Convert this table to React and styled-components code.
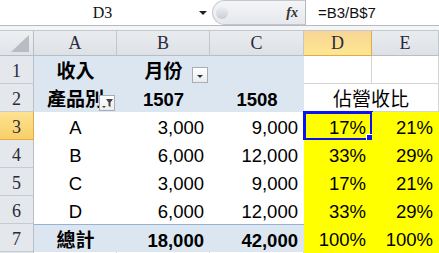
import React from "react";
import styled, { createGlobalStyle } from "styled-components";

const GlobalStyle = createGlobalStyle`
  html, body {
    margin: 0;
    padding: 0;
    background: #ffffff;
    overflow: hidden;
  }
`;

const CELL_FONT = `"Liberation Sans", "Noto Sans CJK TC", Arial, sans-serif`;
const HEAD_FONT = `"Liberation Serif", "Times New Roman", serif`;

const Window = styled.div`
  width: 439px;
  height: 253px;
  overflow: hidden;
  background: #f3f4f6;
`;

const FormulaBar = styled.div`
  display: flex;
  height: 25px;
  background: #ffffff;
  border-bottom: 1px solid #b4bac2;
`;

const NameBox = styled.div`
  width: 212px;
  display: flex;
  align-items: center;
  padding-right: 5px;
  box-sizing: border-box;
`;

const NameText = styled.div`
  flex: 1;
  text-align: center;
  font-family: ${HEAD_FONT};
  font-size: 16px;
  color: #111;
  padding-left: 6px;
`;

const DropArrow = styled.div`
  width: 0;
  height: 0;
  border-left: 4px solid transparent;
  border-right: 4px solid transparent;
  border-top: 4px solid #222;
`;

const ToolPanel = styled.div`
  width: 93px;
  display: flex;
  align-items: center;
  justify-content: space-between;
  padding: 0 7px 0 3px;
  box-sizing: border-box;
  background: linear-gradient(#f4f5f7, #e6e8ec);
  border: 1px solid #c3c7cd;
  border-right: none;
  border-radius: 13px 0 0 13px;
`;

const Knob = styled.div`
  width: 12px;
  height: 12px;
  border-radius: 50%;
  background: linear-gradient(#eceef1, #c9cdd3);
`;

const Fx = styled.span`
  font-family: ${HEAD_FONT};
  font-style: italic;
  font-weight: bold;
  font-size: 14px;
  color: #333;
`;

const FormulaInput = styled.div`
  flex: 1;
  display: flex;
  align-items: center;
  padding-left: 12px;
  border-left: 1px solid #b4bac2;
  font-family: ${CELL_FONT};
  font-size: 15px;
  color: #111;
`;

const Gap = styled.div`
  height: 4px;
  background: #f4f5f7;
  border-bottom: 1px solid #c3c8ce;
`;

const Sheet = styled.div`
  display: grid;
  grid-template-columns: 34px 83px 93px 94px 68px 67px;
  grid-template-rows: 25px repeat(8, 28px);
  background: #ffffff;
`;

const Corner = styled.div`
  display: flex;
  align-items: flex-end;
  justify-content: flex-end;
  padding: 0 4px 3px 0;
  box-sizing: border-box;
  background: linear-gradient(#eef0f3, #dfe3e8);
  border-right: 1px solid #b8bec6;
  border-bottom: 1px solid #b8bec6;
`;

const ColHead = styled.div`
  display: flex;
  align-items: center;
  justify-content: center;
  box-sizing: border-box;
  font-family: ${HEAD_FONT};
  font-size: 18px;
  color: #2a2a3a;
  background: ${(p) =>
    p.$active
      ? "linear-gradient(#f8d596, #fde78f)"
      : "linear-gradient(#e9ecef, #dde1e6)"};
  border-right: 1px solid ${(p) => (p.$active ? "#e2aa4b" : "#c2c7ce")};
  border-bottom: 1px solid ${(p) => (p.$active ? "#e2aa4b" : "#b8bec6")};
`;

const RowHead = styled.div`
  display: flex;
  align-items: center;
  justify-content: center;
  box-sizing: border-box;
  padding-top: 3px;
  font-family: ${HEAD_FONT};
  font-size: 18px;
  color: #2a2a3a;
  background: ${(p) =>
    p.$active ? "linear-gradient(#fde291, #f9cf68)" : "#e4e7eb"};
  border-right: 1px solid ${(p) => (p.$active ? "#e2aa4b" : "#b8bec6")};
  border-bottom: 1px solid ${(p) => (p.$active ? "#e2aa4b" : "#c6cbd1")};
`;

const fills = {
  pivot: "#dce6f1",
  yellow: "#ffff00",
  white: "#ffffff",
};

const Cell = styled.div`
  position: relative;
  box-sizing: border-box;
  padding: 3px 6px 0 6px;
  line-height: 25px;
  white-space: nowrap;
  font-family: ${CELL_FONT};
  font-size: ${(p) => (p.$cjk ? "19px" : "18.5px")};
  font-weight: ${(p) => (p.$bold ? 700 : 400)};
  color: #000;
  text-align: ${(p) => p.$align || "left"};
  background: ${(p) => fills[p.$fill || "white"]};
  grid-column: ${(p) => (p.$span ? `span ${p.$span}` : "auto")};
  border-top: ${(p) => (p.$topLine ? "1px solid #95b3d7" : "none")};
  border-right: ${(p) => (p.$grid ? "1px solid #d4d4d4" : "none")};
  border-bottom: ${(p) => (p.$grid ? "1px solid #d4d4d4" : "none")};
`;

const ListButton = styled.div`
  position: absolute;
  right: 2px;
  bottom: 1px;
  width: 16px;
  height: 16px;
  box-sizing: border-box;
  display: flex;
  align-items: center;
  justify-content: center;
  background: linear-gradient(#ffffff, #e9ecef);
  border: 1px solid #a7adb5;
`;

const SmallArrow = styled.div`
  width: 0;
  height: 0;
  margin-top: 3px;
  border-left: 3px solid transparent;
  border-right: 3px solid transparent;
  border-top: 3px solid #333;
`;

const Selection = styled.div`
  position: absolute;
  left: -1px;
  top: -1px;
  right: -1px;
  bottom: -1px;
  border: 3px solid #0a14f0;
  pointer-events: none;
`;

const Handle = styled.div`
  position: absolute;
  right: -3px;
  bottom: -3px;
  width: 5px;
  height: 5px;
  background: #0a14f0;
  border: 1px solid #ffffff;
`;

const FilterIcon = () => (
  <svg width="12" height="10" viewBox="0 0 12 10">
    <path d="M1 8 L5 8 L3 10 Z" fill="#444" />
    <path d="M5 1 L12 1 L9.5 4.5 L9.5 9 L7.5 8 L7.5 4.5 Z" fill="#444" />
  </svg>
);

const CornerMark = () => (
  <svg width="18" height="17" viewBox="0 0 18 17">
    <path d="M18 0 L18 17 L0 17 Z" fill="#b9bdc3" />
  </svg>
);

const dataRows = [
  { id: 3, item: "A", b: "3,000", c: "9,000", d: "17%", e: "21%" },
  { id: 4, item: "B", b: "6,000", c: "12,000", d: "33%", e: "29%" },
  { id: 5, item: "C", b: "3,000", c: "9,000", d: "17%", e: "21%" },
  { id: 6, item: "D", b: "6,000", c: "12,000", d: "33%", e: "29%" },
];

export default function App() {
  return (
    <>
      <GlobalStyle />
      <Window>
        <FormulaBar>
          <NameBox>
            <NameText>D3</NameText>
            <DropArrow />
          </NameBox>
          <ToolPanel>
            <Knob />
            <Fx>fx</Fx>
          </ToolPanel>
          <FormulaInput>=B3/B$7</FormulaInput>
        </FormulaBar>
        <Gap />
        <Sheet>
          <Corner>
            <CornerMark />
          </Corner>
          {["A", "B", "C", "D", "E"].map((c) => (
            <ColHead key={c} $active={c === "D"}>
              {c}
            </ColHead>
          ))}

          <RowHead>1</RowHead>
          <Cell $fill="pivot" $bold $cjk $align="center">收入</Cell>
          <Cell $fill="pivot" $bold $cjk $align="center">
            月份
            <ListButton>
              <SmallArrow />
            </ListButton>
          </Cell>
          <Cell $fill="pivot" />
          <Cell $grid />
          <Cell $grid />

          <RowHead>2</RowHead>
          <Cell $fill="pivot" $bold $cjk $align="center">
            產品別
            <ListButton>
              <FilterIcon />
            </ListButton>
          </Cell>
          <Cell $fill="pivot" $bold $align="center">1507</Cell>
          <Cell $fill="pivot" $bold $align="center">1508</Cell>
          <Cell $grid $cjk $span={2} $align="center">佔營收比</Cell>

          {dataRows.map((r) => (
            <React.Fragment key={r.id}>
              <RowHead $active={r.id === 3}>{r.id}</RowHead>
              <Cell $align="center">{r.item}</Cell>
              <Cell $align="right">{r.b}</Cell>
              <Cell $align="right">{r.c}</Cell>
              <Cell $fill="yellow" $align="right">
                {r.d}
                {r.id === 3 && (
                  <Selection>
                    <Handle />
                  </Selection>
                )}
              </Cell>
              <Cell $fill="yellow" $align="right">{r.e}</Cell>
            </React.Fragment>
          ))}

          <RowHead>7</RowHead>
          <Cell $fill="pivot" $topLine $bold $cjk $align="center">總計</Cell>
          <Cell $fill="pivot" $topLine $bold $align="right">18,000</Cell>
          <Cell $fill="pivot" $topLine $bold $align="right">42,000</Cell>
          <Cell $fill="yellow" $align="right">100%</Cell>
          <Cell $fill="yellow" $align="right">100%</Cell>

          <RowHead />
          <Cell $grid />
          <Cell $grid />
          <Cell $grid />
          <Cell $fill="yellow" />
          <Cell $fill="yellow" />
        </Sheet>
      </Window>
    </>
  );
}
